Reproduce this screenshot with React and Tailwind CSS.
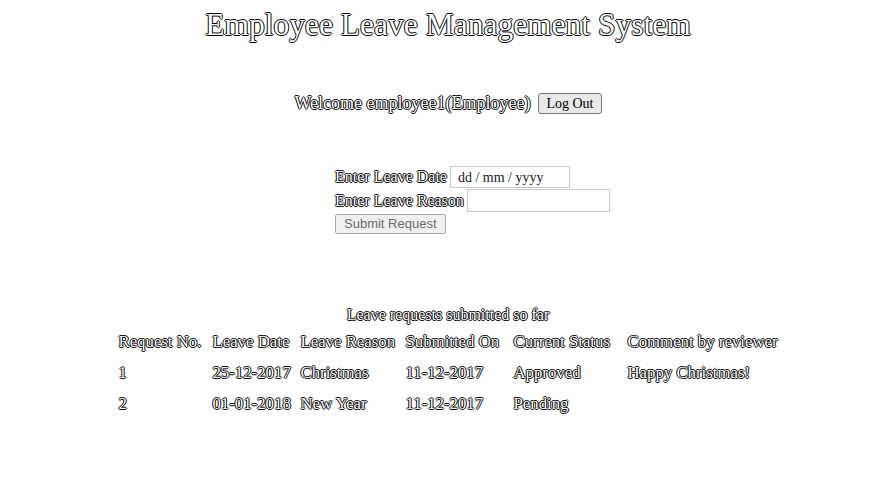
import React from 'react'

const outline = '[text-shadow:-1px_0_#000,1px_0_#000,0_-1px_#000,0_1px_#000]'

const requests = [
  { no: '1', date: '25-12-2017', reason: 'Christmas', submitted: '11-12-2017', status: 'Approved', comment: 'Happy Christmas!' },
  { no: '2', date: '01-01-2018', reason: 'New Year', submitted: '11-12-2017', status: 'Pending', comment: '' },
]

const headers = ['Request No.', 'Leave Date', 'Leave Reason', 'Submitted On', 'Current Status', 'Comment by reviewer']
const widths = ['w-[94px]', 'w-[88px]', 'w-[105px]', 'w-[108px]', 'w-[114px]', 'w-[150px]']

export default function App() {
  return (
    <div className={`min-h-screen bg-white pl-[25px] text-white ${outline} font-['Liberation_Serif',serif] text-[16px]`}>
      <h1 className="pt-[7px] text-center text-[31.5px] leading-[36px]">Employee Leave Management System</h1>

      <div className="mt-[47px] flex items-center justify-center gap-[8px] text-[18px]">
        <span>Welcome employee1(Employee)</span>
        <button className="h-[21px] rounded-[3px] border border-[#767676] bg-[#e9e9e9] px-[7px] text-[14px] leading-[18px] text-black [text-shadow:none]">
          Log Out
        </button>
      </div>

      <form className="mt-[49px] flex flex-col items-start pl-[310px]">
        <div className="flex h-[22px] items-center gap-[3px]">
          <label>Enter Leave Date</label>
          <div className="flex h-[22px] w-[120px] items-center border border-[#c8c8c8] bg-white px-[7px] text-[14px] text-[#222] [text-shadow:none]">
            dd / mm / yyyy
          </div>
        </div>
        <div className="mt-[1px] flex h-[23px] items-center gap-[3px]">
          <label>Enter Leave Reason</label>
          <input className="h-[23px] w-[143px] border border-[#c8c8c8] bg-white" />
        </div>
        <button
          type="button"
          className="mt-[2px] h-[20px] rounded-[2px] border border-[#a8a8a8] bg-[#f0f0f0] px-[8px] font-['Liberation_Sans',sans-serif] text-[13px] leading-[18px] text-[#6d6d6d] [text-shadow:none]"
        >
          Submit Request
        </button>
      </form>

      <div className="mt-[71px] flex justify-center">
        <table className="border-separate border-spacing-0 text-left text-[16.8px]">
          <caption className="pb-[7px] text-[16px] leading-[20px]">Leave requests submitted so far</caption>
          <thead>
            <tr>
              {headers.map((h, i) => (
                <th key={h} className={`${widths[i]} h-[31px] whitespace-nowrap p-0 align-top font-normal leading-[20px]`}>{h}</th>
              ))}
            </tr>
          </thead>
          <tbody>
            {requests.map(r => (
              <tr key={r.no}>
                {[r.no, r.date, r.reason, r.submitted, r.status, r.comment].map((c, i) => (
                  <td key={i} className={`${widths[i]} h-[31px] whitespace-nowrap p-0 align-top leading-[20px]`}>{c}</td>
                ))}
              </tr>
            ))}
          </tbody>
        </table>
      </div>
    </div>
  )
}
